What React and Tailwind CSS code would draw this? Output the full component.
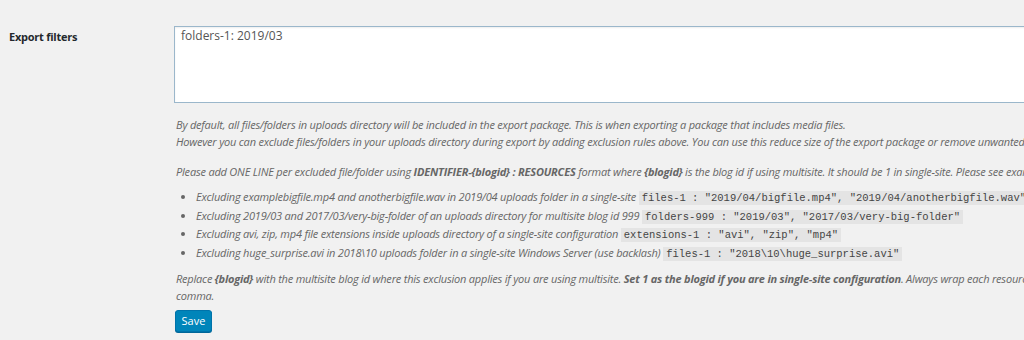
import React from 'react';

const SANS = { fontFamily: '"Open Sans", "Noto Sans", sans-serif' };

function Code({ children }) {
  return (
    <code className="not-italic tracking-normal bg-[#e4e4e4] text-[#444] px-[3px] py-[1px] text-[10.5px] font-['Liberation_Mono',monospace]">
      {children}
    </code>
  );
}

const examples = [
  ['Excluding examplebigfile.mp4 and anotherbigfile.wav in 2019/04 uploads folder in a single-site', 'files-1 : "2019/04/bigfile.mp4", "2019/04/anotherbigfile.wav"'],
  ['Excluding 2019/03 and 2017/03/very-big-folder of an uploads directory for multisite blog id 999', 'folders-999 : "2019/03", "2017/03/very-big-folder"'],
  ['Excluding avi, zip, mp4 file extensions inside uploads directory of a single-site configuration', 'extensions-1 : "avi", "zip", "mp4"'],
  ['Excluding huge_surprise.avi in 2018\\10 uploads folder in a single-site Windows Server (use backlash)', 'files-1 : "2018\\10\\huge_surprise.avi"'],
];

export default function App() {
  return (
    <div className="w-[1024px] h-[340px] overflow-hidden bg-[#f1f1f1] text-[#23282d]" style={SANS}>
      <div className="flex pt-[26px]">
        <div className="w-[174px] shrink-0 pl-[9px] pt-[3px] text-[11px] tracking-[-0.25px] font-bold text-[#23282d]">
          Export filters
        </div>
        <div className="flex-1 min-w-0 whitespace-nowrap">
          <div className="w-[900px] h-[77px] bg-white border border-[#9bb7cb] shadow-[inset_0_1px_2px_rgba(0,0,0,0.07)] px-[6px] pt-0 text-[12px] text-[#555]">
            folders-1: 2019/03
          </div>

          <div className="mt-[13px] pl-[2px] italic text-[11px] tracking-[-0.2px] leading-[17px] text-[#666]">
            <p>By default, all files/folders in uploads directory will be included in the export package. This is when exporting a package that includes media files.</p>
            <p>However you can exclude files/folders in your uploads directory during export by adding exclusion rules above. You can use this reduce size of the export package or remove unwanted files from it.</p>
            <p className="mt-[13px]">
              Please add ONE LINE per excluded file/folder using <b>IDENTIFIER-{'{blogid}'} : RESOURCES</b> format where <b>{'{blogid}'}</b> is the blog id if using multisite. It should be 1 in single-site. Please see examples below.
            </p>
            <ul className="mt-[8px] ml-[20px] list-disc marker:text-[#666]">
              {examples.map(([text, code]) => (
                <li key={code} className="h-[18.5px] leading-[18.5px]">
                  {text} <Code>{code}</Code>
                </li>
              ))}
            </ul>
            <p className="mt-[8px]">
              Replace <b>{'{blogid}'}</b> with the multisite blog id where this exclusion applies if you are using multisite. <b>Set 1 as the blogid if you are in single-site configuration</b>. Always wrap each resource in double quotes and separate them by a
              <br />
              comma.
            </p>
          </div>

          <button
            type="button"
            className="mt-[6px] ml-[1px] h-[22px] w-[37px] rounded-[3px] bg-[#0085ba] border border-[#0073aa] text-white text-[11px] shadow-[0_1px_0_#006799]"
          >
            Save
          </button>
        </div>
      </div>
    </div>
  );
}
